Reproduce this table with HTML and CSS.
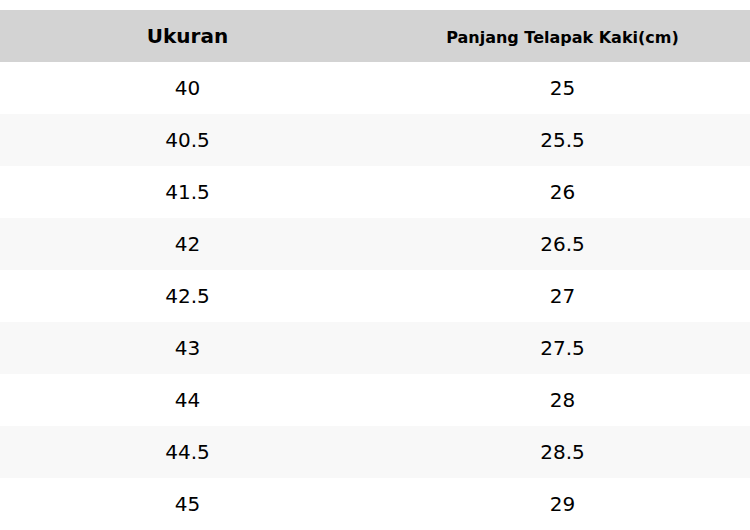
FILE: index.html
```html
<!DOCTYPE html>
<html>
<head>
<meta charset="utf-8">
<link rel="stylesheet" href="styles.css">
</head>
<body>
<div class="wrap">
<table class="size-table">
<thead>
<tr><th>Ukuran</th><th><span class="th-sub">Panjang Telapak Kaki(cm)</span></th></tr>
</thead>
<tbody>
<tr><td>40</td><td>25</td></tr>
<tr><td>40.5</td><td>25.5</td></tr>
<tr><td>41.5</td><td>26</td></tr>
<tr><td>42</td><td>26.5</td></tr>
<tr><td>42.5</td><td>27</td></tr>
<tr><td>43</td><td>27.5</td></tr>
<tr><td>44</td><td>28</td></tr>
<tr><td>44.5</td><td>28.5</td></tr>
<tr><td>45</td><td>29</td></tr>
</tbody>
</table>
</div>
</body>
</html>
```
FILE: styles.css
```css
html, body {
  margin: 0;
  padding: 0;
  background: #ffffff;
  font-family: "DejaVu Sans", sans-serif;
  color: #000000;
}
.wrap {
  padding-top: 10px;
}
.size-table {
  width: 750px;
  border-collapse: collapse;
  border-spacing: 0;
  table-layout: fixed;
}
.size-table th,
.size-table td {
  width: 50%;
  height: 52px;
  padding: 0;
  text-align: center;
  vertical-align: middle;
  font-size: 20px;
}
.size-table th {
  font-weight: bold;
}
.size-table thead tr {
  background: #d3d3d3;
}
.th-sub {
  font-size: 16px;
}
.size-table tbody tr:nth-child(even) {
  background: #f8f8f8;
}
```
